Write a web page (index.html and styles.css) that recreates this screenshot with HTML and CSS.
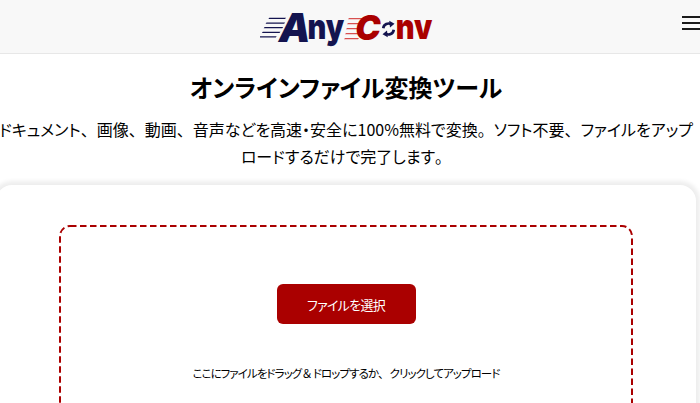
FILE: index.html
```html
<!DOCTYPE html>
<html lang="ja">
<head>
<meta charset="utf-8">
<title>AnyConv</title>
<link rel="stylesheet" href="styles.css">
</head>
<body>
<header class="site-header">
  <a class="logo" href="#">
    <svg class="speed speed-navy" viewBox="0 0 28 24" width="26" height="24"><g fill="#14144f"><path d="M10 1h18l-1 1.300H9z"/><path d="M7 6h20l-1 1.300H6z"/><path d="M5 11h20l-1 1.300H4z"/><path d="M3 16h19l-1 1.300H2z"/><path d="M0 21h18l-1 1.300H0z"/></g></svg>
    <span class="mark navy big letter-a">A</span><span class="mark tall navy">ny</span>
    <svg class="speed speed-red" viewBox="0 0 20 24" width="20" height="24"><g fill="#d8504f"><path d="M5 2h15l-1 1.300H4z"/><path d="M4 7h15l-1 1.300H3z"/><path d="M3 12h15l-1 1.300H2z"/><path d="M2 17h15l-1 1.300H1z"/><path d="M1 22h14l-1 1.300H0z"/></g></svg>
    <span class="mark red big letter-c">C</span>
    <svg class="sync" viewBox="0 0 20 24" width="15" height="20"><path d="M3 11a7 7 0 0 1 11-5" fill="none" stroke="#14144f" stroke-width="3.500"/><path d="M11 1l7 4-6 5z" fill="#14144f"/><path d="M17 13a7 7 0 0 1-11 5" fill="none" stroke="#14144f" stroke-width="3.500"/><path d="M9 23l-7-4 6-5z" fill="#14144f"/></svg>
    <span class="mark tall red">nv</span>
  </a>
  <button class="menu" aria-label="メニュー"><span></span><span></span><span></span></button>
</header>
<main class="page">
  <section class="intro">
    <h1>オンラインファイル変換ツール</h1>
    <p>ドキュメント<span class="full">、</span>画像<span class="full">、</span>動画<span class="full">、</span>音声などを高速・安全に100%無料で変換<span class="full">。</span>ソフト不要<span class="full">、</span>ファイルをアップロードするだけで完了します<span class="full">。</span></p>
  </section>
  <section class="card">
    <div class="dropzone">
      <svg class="dash-frame" width="574" height="340" viewBox="0 0 574 340" aria-hidden="true"><rect x="1" y="1" width="572" height="338" rx="10" ry="10"/></svg>
      <button class="pick">ファイルを選択</button>
      <p class="hint">ここにファイルをドラッグ<span class="full">＆</span>ドロップするか<span class="full">、</span>クリックしてアップロード</p>
    </div>
  </section>
</main>
</body>
</html>
```
FILE: styles.css
```css
* { box-sizing: border-box; }
html, body { margin: 0; height: 100%; overflow: hidden; }
body {
  background: #fff;
  color: #000;
  font-family: "Noto Sans CJK JP", "Noto Sans", sans-serif;
  font-feature-settings: "palt";
}
.full { font-feature-settings: normal; letter-spacing: 0; }
.site-header {
  height: 54px;
  background: #f8f8f8;
  border-bottom: 1px solid #e7e7e7;
  position: relative;
  display: flex;
  justify-content: center;
  align-items: center;
  padding-right: 8px;
}
.logo {
  display: flex;
  align-items: center;
  height: 40px;
  margin-top: 2px;
  text-decoration: none;
}
.mark {
  font-family: "Inter", "Liberation Sans", sans-serif;
  font-weight: 900;
  font-size: 29px;
  line-height: 40px;
}
.tall {
  display: inline-block;
  transform: scaleY(1.22);
  transform-origin: 50% 68%;
}
.big { font-size: 40px; font-style: italic; }
.navy { color: #14144f; }
.red { color: #aa0000; }
.speed-navy { margin-right: -7px; }
.speed-red { margin-right: -9px; }
.letter-a { margin-right: -3px; }
.letter-c { font-size: 34px; }
.sync { margin: 3px 0 0 0; }
.menu {
  position: absolute;
  right: 0;
  top: 16px;
  width: 18px;
  height: 14px;
  padding: 0;
  border: 0;
  background: none;
  display: flex;
  flex-direction: column;
  justify-content: space-between;
}
.menu span { display: block; height: 2px; background: #1a1a1a; }
.page {
  width: 700px;
  margin-left: -4px;
}
.intro {
  text-align: center;
  padding-top: 15px;
}
.intro h1 {
  margin: 0;
  font-size: 24px;
  line-height: 36px;
  font-weight: 700;
}
.intro p {
  margin: 11px 0 0;
  font-size: 16px;
  line-height: 27px;
}
.card {
  margin-top: 15px;
  background: #fff;
  border-radius: 16px;
  box-shadow: 0 0 4px 4px rgba(0, 0, 0, 0.07);
  padding: 40px 63px;
  height: 400px;
}
.dropzone {
  position: relative;
  height: 340px;
  display: flex;
  flex-direction: column;
  align-items: center;
  padding-top: 59px;
}
.dash-frame {
  position: absolute;
  left: 0;
  top: 0;
  pointer-events: none;
}
.dash-frame rect {
  fill: none;
  stroke: #aa0000;
  stroke-width: 2;
  stroke-dasharray: 6.5 3.5;
}
.pick {
  width: 139px;
  height: 40px;
  border: 0;
  border-radius: 6px;
  background: #aa0000;
  color: #fff;
  font: 13px "Noto Sans CJK JP", sans-serif;
  font-feature-settings: "palt";
  letter-spacing: -0.7px;
}
.hint {
  margin: 40px 0 0;
  font-size: 11.5px;
  line-height: 18px;
  letter-spacing: -0.93px;
}
```
